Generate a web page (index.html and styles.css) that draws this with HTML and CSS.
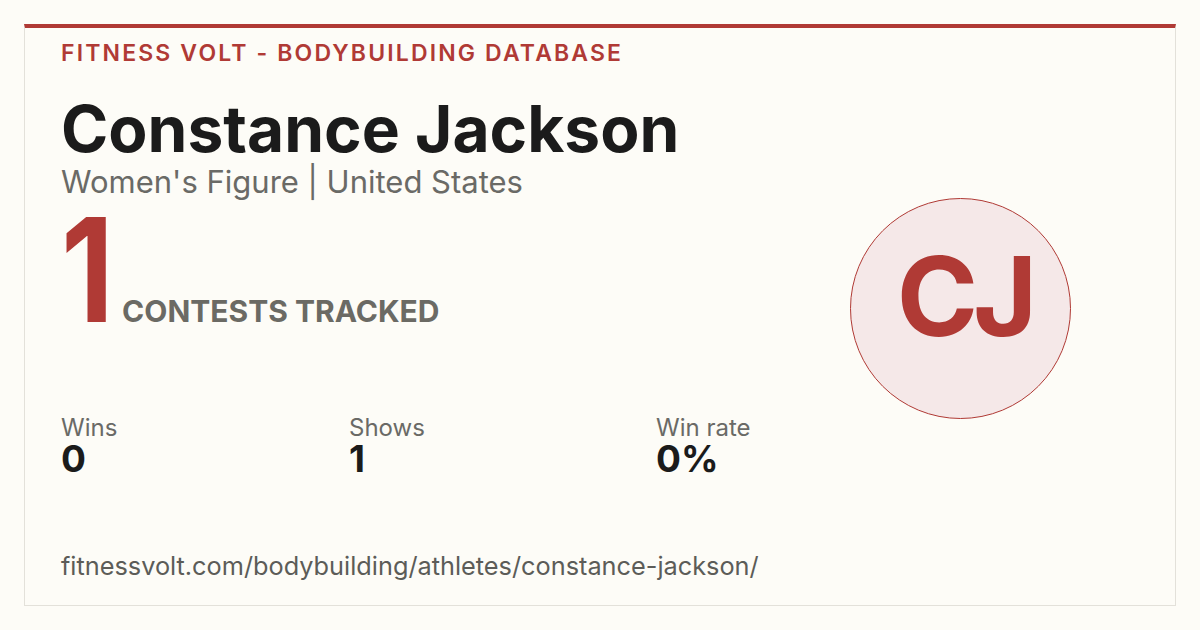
FILE: index.html
```html
<!DOCTYPE html>
<html lang="en">
<head>
<meta charset="utf-8">
<title>Constance Jackson - Fitness Volt</title>
<link rel="stylesheet" href="styles.css">
</head>
<body>
<main class="card">
  <div class="main">
    <div class="brand">FITNESS VOLT - BODYBUILDING DATABASE</div>
    <h1 class="name">Constance Jackson</h1>
    <div class="meta">Women's Figure | United States</div>
    <div class="count">
      <span class="count-num">1</span>
      <span class="count-label">CONTESTS TRACKED</span>
    </div>
    <div class="stats">
      <div class="stat stat-wins">
        <div class="stat-label">Wins</div>
        <div class="stat-value">0</div>
      </div>
      <div class="stat stat-shows">
        <div class="stat-label">Shows</div>
        <div class="stat-value">1</div>
      </div>
      <div class="stat">
        <div class="stat-label">Win rate</div>
        <div class="stat-value">0%</div>
      </div>
    </div>
    <div class="url">fitnessvolt.com/bodybuilding/athletes/constance-jackson/</div>
  </div>
  <div class="side">
    <div class="avatar">CJ</div>
  </div>
</main>
</body>
</html>
```
FILE: styles.css
```css
* { box-sizing: border-box; }
html, body { margin: 0; padding: 0; }
body {
  width: 1200px;
  height: 630px;
  padding: 24px;
  background: #fdfcf7;
  font-family: Inter, "DejaVu Sans", sans-serif;
  color: #1c1c1c;
}
.card {
  width: 1152px;
  height: 582px;
  border: 1px solid #e3e1da;
  border-top: 4px solid #b03a35;
  background: #fdfcf7;
  display: flex;
  padding: 0 0 0 36px;
}
.main {
  flex: 1;
  display: flex;
  flex-direction: column;
}
.brand {
  margin-top: 11px;
  font-size: 23px;
  line-height: 28px;
  font-weight: 600;
  letter-spacing: 2.15px;
  color: #b03a35;
}
.name {
  margin: 26px 0 0;
  font-size: 64px;
  line-height: 72px;
  font-weight: 700;
  letter-spacing: 0;
  color: #1b1b1b;
}
.meta {
  margin-top: -2px;
  font-size: 31px;
  line-height: 38px;
  color: #6a6a66;
}
.count {
  display: flex;
  align-items: baseline;
  margin-top: 14px;
}
.count-num {
  display: inline-block;
  font-size: 144px;
  line-height: 110px;
  font-weight: 700;
  color: #b03a35;
  letter-spacing: -4px;
  transform: scaleX(0.85);
  transform-origin: left center;
  margin-right: 3px;
}
.count-label {
  font-size: 30px;
  line-height: 29px;
  font-weight: 700;
  letter-spacing: 0;
  color: #6b6a64;
}
.stats {
  display: flex;
  margin-top: 88px;
}
.stat-wins { width: 288px; }
.stat-shows { width: 307px; }
.stat-label {
  font-size: 24px;
  line-height: 28px;
  color: #6a6a66;
}
.stat-value {
  font-size: 37px;
  line-height: 34px;
  font-weight: 700;
  color: #1b1b1b;
}
.url {
  margin-top: 74px;
  font-size: 25.3px;
  line-height: 32px;
  color: #5c5c58;
}
.side {
  width: 346px;
  display: flex;
  align-items: center;
  padding-left: 21px;
  padding-bottom: 16px;
}
.avatar {
  width: 221px;
  height: 221px;
  flex: none;
  border-radius: 50%;
  border: 1.5px solid #b03a35;
  background: #f5e8e8;
  color: #b03a35;
  font-size: 110px;
  font-weight: 700;
  display: flex;
  align-items: center;
  justify-content: center;
  letter-spacing: -5px;
  padding-left: 8px;
  padding-bottom: 26px;
}
```
